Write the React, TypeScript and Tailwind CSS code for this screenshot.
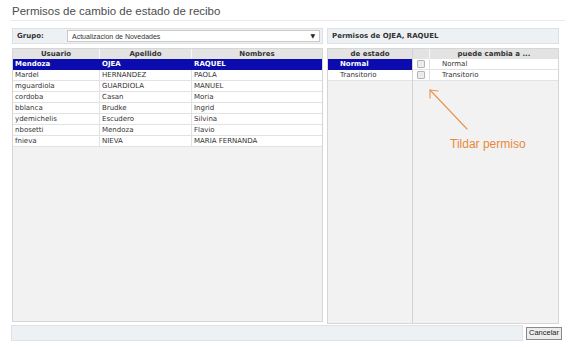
import React from 'react';

const usuarios = [
    { usuario: 'Mendoza', apellido: 'OJEA', nombres: 'RAQUEL' },
    { usuario: 'Mardel', apellido: 'HERNANDEZ', nombres: 'PAOLA' },
    { usuario: 'mguardiola', apellido: 'GUARDIOLA', nombres: 'MANUEL' },
    { usuario: 'cordoba', apellido: 'Casan', nombres: 'Moria' },
    { usuario: 'bblanca', apellido: 'Brudke', nombres: 'Ingrid' },
    { usuario: 'ydemichelis', apellido: 'Escudero', nombres: 'Silvina' },
    { usuario: 'nbosetti', apellido: 'Mendoza', nombres: 'Flavio' },
    { usuario: 'fnieva', apellido: 'NIEVA', nombres: 'MARIA FERNANDA' },
];

const estados = ['Normal', 'Transitorio'];

const Checkbox: React.FC = () => (
    <span className="block w-[8px] h-[8px] border border-[#b5b5b5] bg-[#ececec] rounded-[1px]" />
);

const App: React.FC = () => {
    return (
        <div className="w-[579px] h-[347px] bg-white text-[#333] font-['DejaVu_Sans',sans-serif] text-[7px] leading-none">
            <div className="px-[12px] pt-[5px]">
                <h1 className="font-['Liberation_Sans',Arial,sans-serif] text-[11.5px] leading-[13px] text-[#4d4d4d]">
                    Permisos de cambio de estado de recibo
                </h1>
            </div>
            <div className="mx-[10px] mt-[2px] h-px bg-[#ebebeb] w-[555px]" />

            <div className="flex gap-[4px] pl-[12px] mt-[7px]">
                {/* panel izquierdo */}
                <div className="w-[311px] flex flex-col gap-[4px]">
                    <div className="h-[16px] flex items-center bg-[#eef1f4] border border-[#dce1e6]">
                        <span className="w-[54px] pl-[4px] font-bold text-[#333]">Grupo:</span>
                        <div className="flex-1 h-[12px] mr-[2px] bg-white border border-[#c9c9c9] flex items-center justify-between px-[4px]">
                            <span className="font-['Liberation_Sans',Arial,sans-serif] text-[7px] text-[#333]">Actualizacion de Novedades</span>
                            <span className="text-[6px] text-[#222]">▼</span>
                        </div>
                    </div>
                    <div className="h-[274px] bg-[#f2f2f2] border border-[#d6d6d6]">
                        <div className="grid grid-cols-[87px_92px_1fr] h-[10px] bg-[#e3e3e3] font-bold text-[#333]">
                            <div className="flex items-center justify-center border-r border-[#f7f7f7]">Usuario</div>
                            <div className="flex items-center justify-center border-r border-[#f7f7f7]">Apellido</div>
                            <div className="flex items-center justify-center">Nombres</div>
                        </div>
                        {usuarios.map((u, i) => (
                            <div
                                key={u.usuario}
                                className={`grid grid-cols-[87px_92px_1fr] h-[11px] border-b ${i === 0 ? 'bg-[#0c0cae] text-white font-bold border-[#0c0cae]' : 'bg-white text-[#333] border-[#e2e2e2]'}`}
                            >
                                <div className={`flex items-center pl-[2px] border-r ${i === 0 ? 'border-[#0c0cae]' : 'border-[#e2e2e2]'}`}>{u.usuario}</div>
                                <div className={`flex items-center pl-[2px] border-r ${i === 0 ? 'border-[#0c0cae]' : 'border-[#e2e2e2]'}`}>{u.apellido}</div>
                                <div className="flex items-center pl-[2px]">{u.nombres}</div>
                            </div>
                        ))}
                    </div>
                </div>

                {/* panel derecho */}
                <div className="w-[232px] flex flex-col gap-[4px]">
                    <div className="h-[16px] flex items-center bg-[#eef1f4] border border-[#dce1e6] pl-[4px] font-bold">
                        Permisos de OJEA, RAQUEL
                    </div>
                    <div className="relative h-[276px] flex border border-[#d6d6d6] bg-[#f2f2f2]">
                        <div className="w-[85px] border-r border-[#d2d2d2]">
                            <div className="h-[10px] bg-[#e3e3e3] flex items-center justify-center font-bold">de estado</div>
                            {estados.map((e, i) => (
                                <div
                                    key={e}
                                    className={`h-[11px] flex items-center pl-[12px] border-b ${i === 0 ? 'bg-[#0c0cae] text-white font-bold border-[#0c0cae]' : 'bg-white border-[#e2e2e2]'}`}
                                >
                                    {e}
                                </div>
                            ))}
                        </div>
                        <div className="flex-1">
                            <div className="grid grid-cols-[17px_1fr] h-[10px] bg-[#e3e3e3] font-bold">
                                <div className="border-r border-[#f7f7f7]" />
                                <div className="flex items-center justify-center">puede cambia a ...</div>
                            </div>
                            {estados.map((e) => (
                                <div key={e} className="grid grid-cols-[17px_1fr] h-[11px] bg-white border-b border-[#e2e2e2]">
                                    <div className="flex items-center justify-center border-r border-[#e2e2e2]">
                                        <Checkbox />
                                    </div>
                                    <div className="flex items-center pl-[12px]">{e}</div>
                                </div>
                            ))}
                        </div>

                        {/* anotacion */}
                        <svg className="absolute left-[95px] top-[37px]" width="50" height="46" viewBox="0 0 50 46" fill="none" stroke="#e8944f" strokeWidth="1.1" strokeLinecap="round">
                            <line x1="7" y1="4" x2="44" y2="43" />
                            <polyline points="7,12 7,4 15,5" />
                        </svg>
                        <span className="absolute left-[122px] top-[89px] font-['Liberation_Sans',Arial,sans-serif] text-[12px] text-[#e8893a] whitespace-nowrap">
                            Tildar permiso
                        </span>
                    </div>
                </div>
            </div>

            <div className="flex items-center pl-[11px] mt-[1px] gap-[3px]">
                <div className="w-[512px] h-[16px] bg-[#eef1f4] border border-[#dfe3e7]" />
                <button className="h-[13px] px-[2px] bg-[#ececec] border border-[#8a8a8a] font-['Liberation_Sans',Arial,sans-serif] text-[7.5px] text-[#222] leading-none">
                    Cancelar
                </button>
            </div>
        </div>
    );
};

export default App;
